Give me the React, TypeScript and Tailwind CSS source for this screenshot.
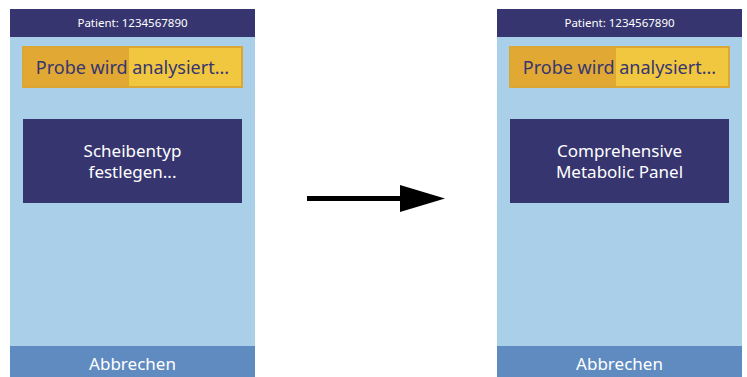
const font = { fontFamily: '"Noto Sans", sans-serif' };

function Screen({ lines }: { lines: string[] }) {
    return (
        <div className="flex h-[368px] w-[245px] flex-col bg-[#a9cfe9]" style={font}>
            <div className="flex h-[28px] items-center justify-center bg-[#36356f] text-[11.5px] text-white">
                Patient: 1234567890
            </div>
            <div className="px-[12px] pt-[9px]">
                <div className="relative flex h-[42px] items-center justify-center border-2 border-[#dba634] bg-[#f1c740]">
                    <div className="absolute inset-y-0 left-0 w-[105px] bg-[#e1a933]"/>
                    <span className="relative text-[18px] text-[#363570]">Probe wird analysiert...</span>
                </div>
            </div>
            <div className="px-[13px] pt-[31px]">
                <div className="flex h-[84px] flex-col items-center justify-center bg-[#36356f] text-[17px] leading-[21px] text-white">
                    {lines.map((l) => (
                        <span key={l}>{l}</span>
                    ))}
                </div>
            </div>
            <div className="flex-1"/>
            <div className="flex h-[31px] items-center justify-center bg-[#5f8bc0] pt-[5px] text-[17px] text-white">
                Abbrechen
            </div>
        </div>
    );
}

export default function App() {
    return (
        <div className="flex h-[377px] w-[747px] items-end bg-white pl-[10px]">
            <Screen lines={["Scheibentyp", "festlegen..."]}/>
            <div className="flex w-[242px] items-center self-stretch pl-[52px]">
                <div className="mt-[20px] flex items-center">
                    <div className="h-[5px] w-[93px] bg-black"/>
                    <svg width="45" height="27" viewBox="0 0 45 27">
                        <polygon points="0,0 45,13.5 0,27" fill="black"/>
                    </svg>
                </div>
            </div>
            <Screen lines={["Comprehensive", "Metabolic Panel"]}/>
        </div>
    );
}
